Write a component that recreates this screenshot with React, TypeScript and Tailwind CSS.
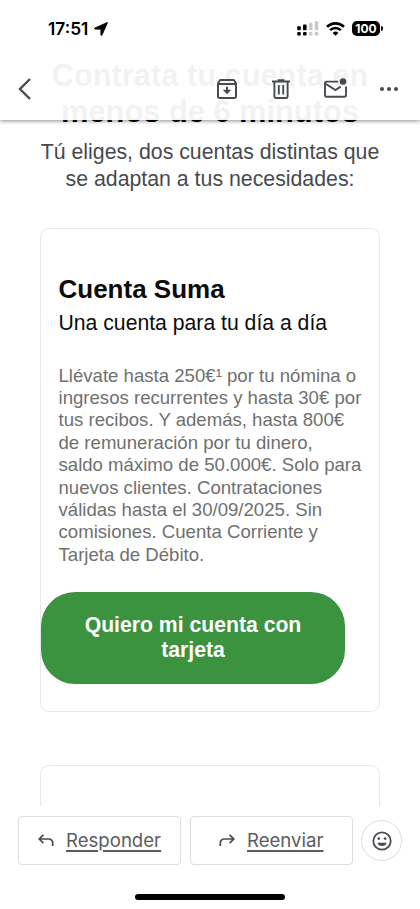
import type { ReactNode } from "react"

interface IconProps {
  className?: string;
}

function LocationArrow({ className }: IconProps) {
  return (
    <svg viewBox="0 0 14 14" className={className} fill="currentColor" stroke="currentColor" strokeWidth="0.8" strokeLinejoin="round">
      <path d="M13.1.6.9 6c-.7.4-.6 1.1.2 1.1l5.7.1.1 5.7c0 .7.8.8 1.1.1L13.4.9c.1-.3 0-.4-.3-.3Z" />
    </svg>
  );
}

function SignalIcon({ className }: IconProps) {
  return (
    <svg viewBox="0 0 22 16" className={className}>
      <g fill="#000">
        <rect x="0.2" y="5.2" width="3.6" height="4" rx="1" />
        <rect x="6" y="3.4" width="3.6" height="5.8" rx="1" />
        <rect x="0.2" y="11" width="3.6" height="3.4" rx="1" />
        <rect x="6" y="11" width="3.6" height="3.4" rx="1" />
      </g>
      <g fill="#c9c9c9">
        <rect x="11.9" y="1.8" width="3.6" height="7.4" rx="1" />
        <rect x="17.7" y="0.2" width="3.6" height="9" rx="1" />
        <rect x="11.9" y="11" width="3.6" height="3.4" rx="1" />
        <rect x="17.7" y="11" width="3.6" height="3.4" rx="1" />
      </g>
    </svg>
  );
}

function WifiIcon({ className }: IconProps) {
  return (
    <svg viewBox="0 0 19 14" className={className} fill="none" stroke="#000">
      <path d="M1 4.8a12.2 12.2 0 0 1 17 0" strokeWidth="2.6" />
      <path d="M4.1 8.2a7.7 7.7 0 0 1 10.8 0" strokeWidth="2.5" />
      <path d="M9.5 13.8 6.6 10.9a4.1 4.1 0 0 1 5.8 0Z" fill="#000" stroke="none" />
    </svg>
  );
}

function ArchiveIcon({ className }: IconProps) {
  return (
    <svg viewBox="0 0 20 20" className={className} fill="none" stroke="currentColor" strokeWidth="2">
      <path d="M1 4.2 3.2 1h13.6L19 4.2V17.6A1.4 1.4 0 0 1 17.6 19H2.4A1.4 1.4 0 0 1 1 17.6Z" strokeLinejoin="round" />
      <path d="M1 4.9h18M10 7.8v6" />
      <path d="M5.8 10.8h8.4L10 15.2Z" fill="currentColor" stroke="none" />
    </svg>
  );
}

function TrashIcon({ className }: IconProps) {
  return (
    <svg viewBox="0 0 18 20" className={className} fill="none" stroke="currentColor" strokeWidth="1.9">
      <path d="M0 2.5h18M5.6 1.2h6.8" />
      <path d="M2.4 2.5v15.1A1.4 1.4 0 0 0 3.8 19h10.4a1.4 1.4 0 0 0 1.4-1.4V2.5M6.8 6v9.6M11.2 6v9.6" />
    </svg>
  );
}

function UnreadMailIcon({ className }: IconProps) {
  return (
    <svg viewBox="0 0 24 20" className={className} fill="none" stroke="currentColor" strokeWidth="1.9">
      <path d="M14.2 2.6H2.4A1.4 1.4 0 0 0 1 4v12.4a1.4 1.4 0 0 0 1.4 1.4h18.2a1.4 1.4 0 0 0 1.4-1.4V7.6" />
      <path d="m1.6 4.8 9.9 6.2 5.2-3.4" />
      <circle cx="19" cy="2.5" r="3.3" fill="currentColor" stroke="none" />
    </svg>
  );
}

function ReplyIcon({ className }: IconProps) {
  return (
    <svg viewBox="0 0 16 13" className={className} fill="none" stroke="currentColor" strokeWidth="1.7">
      <path d="M5.4.8 1.2 5l4.2 4.2M1.4 5h9.5A3.7 3.7 0 0 1 14.7 8.7V12" />
    </svg>
  );
}

function SmileIcon({ className }: IconProps) {
  return (
    <svg viewBox="0 0 20 20" className={className} fill="currentColor">
      <circle cx="10" cy="10" r="8.7" fill="none" stroke="currentColor" strokeWidth="1.8" />
      <circle cx="6.8" cy="7.6" r="1.3" />
      <circle cx="13.2" cy="7.6" r="1.3" />
      <path d="M5.3 11.7h9.4a5 5 0 0 1-9.4 0Z" />
    </svg>
  );
}

function StatusBar() {
  return (
    <div className="flex h-[57px] items-center pl-12 pr-[37px] text-black">
      <span className="w-[43px] whitespace-nowrap pt-px font-[Inter,sans-serif] text-[17.3px] font-semibold">17:51</span>
      <LocationArrow className="ml-[3px] h-[14px] w-[14px]" />
      <div className="ml-auto flex items-center">
        <SignalIcon className="mr-[7px] h-4 w-[22px]" />
        <WifiIcon className="mr-[7px] h-[14px] w-[19px]" />
        <span className="flex h-[15px] w-7 items-center justify-center rounded-[5px] bg-black font-[Inter,sans-serif] text-[12px] font-bold leading-none text-white">
          100
        </span>
        <span className="ml-px h-[5px] w-[2px] rounded-r-full bg-black" />
      </div>
    </div>
  );
}

function Toolbar() {
  return (
    <div className="flex h-[63px] items-center pl-[18px] pr-[22px] text-[#474a50]">
      <svg viewBox="0 0 13 22" className="h-[22px] w-[13px]" fill="none" stroke="currentColor" strokeWidth="2.4">
        <path d="M12 1 2 11l10 10" />
      </svg>
      <ArchiveIcon className="ml-[186px] h-5 w-5" />
      <TrashIcon className="ml-[35px] h-5 w-[18px]" />
      <UnreadMailIcon className="ml-[34px] h-5 w-6 overflow-visible" />
      <svg viewBox="0 0 18 4" className="ml-auto h-1 w-[18px]" fill="currentColor">
        <circle cx="2" cy="2" r="2" />
        <circle cx="9" cy="2" r="2" />
        <circle cx="16" cy="2" r="2" />
      </svg>
    </div>
  );
}

function OfferCard({ children }: { children?: ReactNode }) {
  return <section className="mx-10 h-[484px] shrink-0 rounded-[9px] border border-[#e8e8e8]">{children}</section>;
}

export default function App() {
  return (
    <div className="relative flex h-[909px] w-[420px] flex-col overflow-hidden bg-white font-['Liberation_Sans',Arial,sans-serif]">
      {/* Header floats over the scrolled message */}
      <header className="absolute inset-x-0 top-0 z-10 h-[120px] bg-white/95 shadow-[0_1px_4px_rgba(0,0,0,0.45)]">
        <StatusBar />
        <Toolbar />
      </header>

      {/* Message */}
      <main className="flex h-[806px] flex-col overflow-hidden pt-[58px]">
        <h1 className="whitespace-nowrap text-center text-[30.8px] font-bold leading-9 text-black">
          Contrata tu cuenta en
          <br />
          menos de 6 minutos
        </h1>
        <p className="mt-[9px] whitespace-nowrap text-center text-[21.3px] leading-[27px] text-[#474a50]">
          Tú eliges, dos cuentas distintas que
          <br />
          se adaptan a tus necesidades:
        </p>

        <div className="mt-[35px] flex flex-col gap-[53px]">
          <OfferCard>
            <div className="whitespace-nowrap pl-[17.5px] pt-[43px]">
              <h2 className="text-[26px] font-bold leading-[34px] text-[#0c0c0c]">Cuenta Suma</h2>
              <p className="pt-px text-[21.2px] leading-[32px] text-[#0c0c0c]">Una cuenta para tu día a día</p>
              <p className="mt-[25.6px] text-[18.6px] leading-[22.4px] text-[#707070]">
                Llévate hasta 250€¹ por tu nómina o<br />
                ingresos recurrentes y hasta 30€ por<br />
                tus recibos. Y además, hasta 800€<br />
                de remuneración por tu dinero,<br />
                saldo máximo de 50.000€. Solo para<br />
                nuevos clientes. Contrataciones<br />
                válidas hasta el 30/09/2025. Sin<br />
                comisiones. Cuenta Corriente y<br />
                Tarjeta de Débito.
              </p>
            </div>
            <button className="mt-[25.8px] block h-[92px] w-[304px] whitespace-nowrap rounded-[34px] bg-[#3b923f] pb-[2px] text-center text-[21.2px] font-bold leading-[25px] text-white">
              Quiero mi cuenta con
              <br />
              tarjeta
            </button>
          </OfferCard>
          <OfferCard />
        </div>
      </main>

      {/* Reply actions */}
      <footer className="flex items-center pl-[18px] pt-[10px] font-[Inter,sans-serif] text-[18.6px] text-[#5a5c62]">
        <button className="flex h-[49px] w-[163px] items-center rounded-[4px] border border-[#dcdce2] pl-[19px]">
          <ReplyIcon className="h-[13px] w-4 text-[#474a50]" />
          <span className="ml-3 whitespace-nowrap underline decoration-[1.5px] underline-offset-[3px]">Responder</span>
        </button>
        <button className="ml-[9px] flex h-[49px] w-[163px] items-center rounded-[4px] border border-[#dcdce2] pl-[28px]">
          <ReplyIcon className="h-[13px] w-4 -scale-x-100 text-[#474a50]" />
          <span className="ml-3 whitespace-nowrap underline decoration-[1.5px] underline-offset-[3px]">Reenviar</span>
        </button>
        <button className="ml-2 flex h-[41px] w-[41px] items-center justify-center rounded-full border border-[#dcdce2]">
          <SmileIcon className="h-5 w-5 text-[#474a50]" />
        </button>
      </footer>
      <div className="mx-auto mt-[29px] h-[6px] w-[150px] rounded-full bg-black" />
    </div>
  );
}
